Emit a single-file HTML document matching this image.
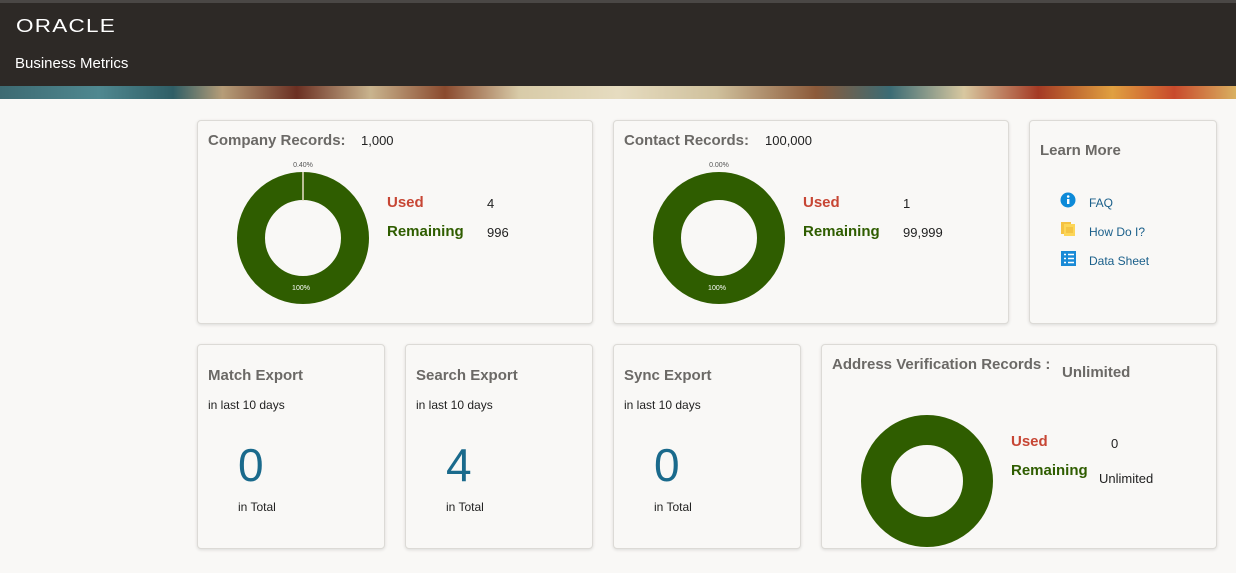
<!DOCTYPE html>
<html><head><style>
body{margin:0;width:1236px;height:573px;background:#f9f8f6;font-family:"Liberation Sans",sans-serif;position:relative;overflow:hidden}
.hdr{position:absolute;left:0;top:0;width:1236px;height:86px;background:#2d2926;border-top:3px solid #4a4745;box-sizing:border-box}
.ban{position:absolute;left:0;top:86px;width:1236px;height:13px;background:linear-gradient(90deg,#3d6a72 0%,#4f8890 8%,#2f5e66 14%,#b69d78 18%,#6b2f22 24%,#c9b48e 30%,#8a4a2e 36%,#d8cba8 42%,#e6dcc0 50%,#cfc09c 58%,#8c5a3a 66%,#3b6b74 72%,#d8c8a0 78%,#a43a24 84%,#e0a040 90%,#c84a2c 95%,#d9b060 100%)}
.card{position:absolute;background:#f9f8f6;border:1px solid #dcdad6;border-radius:4px;box-shadow:0 1px 3px rgba(0,0,0,.12);box-sizing:border-box}
.t{position:absolute;font-weight:bold;color:#6b6966;font-size:15px}
.s{position:absolute;font-size:13px;color:#222}
.used{position:absolute;color:#c74634;font-weight:bold;font-size:15px}
.rem{position:absolute;color:#2f5d00;font-weight:bold;font-size:15px}
.big{position:absolute;font-size:46px;color:#1a6a8c}
.lk{position:absolute;font-size:12px;color:#1a5f8a}
</style></head><body>
<div class="hdr">
<div style="position:absolute;left:16px;top:13px;color:#fff;font-size:18px;letter-spacing:1px;transform:scaleX(1.25);transform-origin:left">ORACLE</div>
<div style="position:absolute;left:15px;top:52px;color:#fff;font-size:15px">Business Metrics</div>
</div>
<div class="ban"></div>

<div class="card" style="left:197px;top:120px;width:396px;height:204px">
<div class="t" style="left:10px;top:11px">Company Records:</div><div class="s" style="left:163px;top:12px">1,000</div>
<svg style="position:absolute;left:0;top:0" width="396" height="204"><circle cx="105" cy="117" r="52" fill="none" stroke="#2f5d00" stroke-width="28"/><line x1="105" y1="51" x2="105" y2="80" stroke="#e8e0c8" stroke-width="1.5"/>
<text x="105" y="46" font-size="7" fill="#555" text-anchor="middle" font-family="Liberation Sans">0.40%</text><text x="103" y="169" font-size="7" fill="#fff" text-anchor="middle" font-family="Liberation Sans">100%</text></svg>
<div class="used" style="left:189px;top:73px">Used</div><div class="s" style="left:289px;top:75px">4</div>
<div class="rem" style="left:189px;top:102px">Remaining</div><div class="s" style="left:289px;top:104px">996</div>
</div>

<div class="card" style="left:613px;top:120px;width:396px;height:204px">
<div class="t" style="left:10px;top:11px">Contact Records:</div><div class="s" style="left:151px;top:12px">100,000</div>
<svg style="position:absolute;left:0;top:0" width="396" height="204"><circle cx="105" cy="117" r="52" fill="none" stroke="#2f5d00" stroke-width="28"/>
<text x="105" y="46" font-size="7" fill="#555" text-anchor="middle" font-family="Liberation Sans">0.00%</text><text x="103" y="169" font-size="7" fill="#fff" text-anchor="middle" font-family="Liberation Sans">100%</text></svg>
<div class="used" style="left:189px;top:73px">Used</div><div class="s" style="left:289px;top:75px">1</div>
<div class="rem" style="left:189px;top:102px">Remaining</div><div class="s" style="left:289px;top:104px">99,999</div>
</div>

<div class="card" style="left:1029px;top:120px;width:188px;height:204px">
<div class="t" style="left:10px;top:21px">Learn More</div>
<svg style="position:absolute;left:30px;top:71px" width="16" height="16"><circle cx="8" cy="8" r="7.5" fill="#0d8ad8"/><rect x="7" y="7" width="2.4" height="5" fill="#fff"/><circle cx="8.2" cy="4.5" r="1.3" fill="#fff"/></svg>
<div class="lk" style="left:59px;top:75px">FAQ</div>
<svg style="position:absolute;left:30px;top:100px" width="16" height="16"><rect x="1" y="1" width="10" height="12" fill="#f5c242"/><rect x="4" y="3" width="11" height="12" fill="#fcd658"/><path d="M6 7h7M6 9h7M6 11h7" stroke="#e8a820" stroke-width=".8"/></svg>
<div class="lk" style="left:59px;top:104px">How Do I?</div>
<svg style="position:absolute;left:31px;top:130px" width="15" height="15"><rect width="15" height="15" fill="#1a8ad6"/><path d="M3 3.5h2M3 7.5h2M3 11.5h2M7 3.5h6M7 7.5h6M7 11.5h6" stroke="#fff" stroke-width="1.5"/></svg>
<div class="lk" style="left:59px;top:133px">Data Sheet</div>
</div>

<div class="card" style="left:197px;top:344px;width:188px;height:205px">
<div class="t" style="left:10px;top:22px">Match Export</div><div class="s" style="left:10px;top:53px;font-size:12px">in last 10 days</div>
<div class="big" style="left:40px;top:93px">0</div><div class="s" style="left:40px;top:155px;font-size:12px">in Total</div></div>
<div class="card" style="left:405px;top:344px;width:188px;height:205px">
<div class="t" style="left:10px;top:22px">Search Export</div><div class="s" style="left:10px;top:53px;font-size:12px">in last 10 days</div>
<div class="big" style="left:40px;top:93px">4</div><div class="s" style="left:40px;top:155px;font-size:12px">in Total</div></div>
<div class="card" style="left:613px;top:344px;width:188px;height:205px">
<div class="t" style="left:10px;top:22px">Sync Export</div><div class="s" style="left:10px;top:53px;font-size:12px">in last 10 days</div>
<div class="big" style="left:40px;top:93px">0</div><div class="s" style="left:40px;top:155px;font-size:12px">in Total</div></div>

<div class="card" style="left:821px;top:344px;width:396px;height:205px">
<div class="t" style="left:10px;top:11px">Address Verification Records :</div><div class="t" style="left:240px;top:19px">Unlimited</div>
<svg style="position:absolute;left:0;top:0" width="396" height="205"><circle cx="105" cy="136" r="51" fill="none" stroke="#2f5d00" stroke-width="30"/></svg>
<div class="used" style="left:189px;top:88px">Used</div><div class="s" style="left:289px;top:91px">0</div>
<div class="rem" style="left:189px;top:117px">Remaining</div><div class="s" style="left:277px;top:126px">Unlimited</div>
</div>
</body></html>
